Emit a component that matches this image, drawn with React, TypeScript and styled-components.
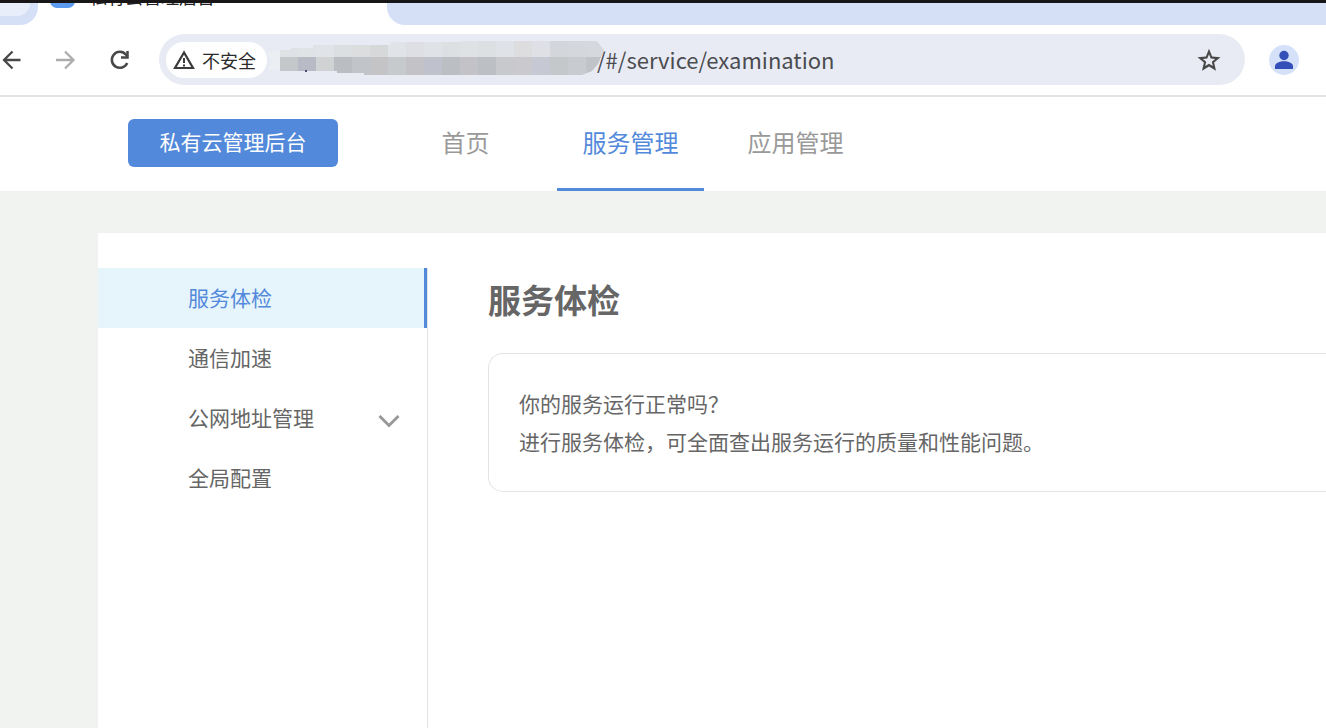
import React from "react";
import styled, { createGlobalStyle } from "styled-components";

const cjk = `"Noto Sans CJK SC", sans-serif`;

const GlobalStyle = createGlobalStyle`
  *, *::before, *::after { box-sizing: border-box; }
  body { margin: 0; background: #fff; font-family: ${cjk}; color: #666; }
  button, input { font: inherit; color: inherit; border: 0; background: none; padding: 0; margin: 0; }
  button { cursor: pointer; }
  a { color: inherit; text-decoration: none; }
  ul { list-style: none; margin: 0; padding: 0; }
`;

const Page = styled.div`
  display: flex;
  flex-direction: column;
  min-height: 100vh;
  border-top: 3px solid #181616;
  overflow: hidden;
`;

const TabStrip = styled.div`
  display: flex;
  height: 22px;
  overflow: hidden;
`;

const PreviousTabs = styled.div`
  flex: 0 0 38px;
  padding: 0 8px 9px 0;
  background: #d5e0f7;
  border-bottom-right-radius: 18px;
`;

const TabSearch = styled.button`
  display: block;
  width: 100%;
  height: 100%;
  background: #e8effb;
  border-bottom-right-radius: 14px;
`;

const ActiveTab = styled.div`
  flex: 0 0 349px;
  display: flex;
  align-items: flex-end;
  gap: 14px;
  height: 8px;
  padding: 0 0 3px 12px;
`;

const Favicon = styled.span`
  width: 25px;
  height: 24px;
  border-radius: 7px;
  background: #5b9bf0;
`;

const TabTitle = styled.span`
  color: #222;
  font-size: 18px;
  line-height: 24px;
`;

const InactiveTabs = styled.div`
  flex: 1;
  background: #d5e0f7;
  border-bottom-left-radius: 18px;
`;

const Toolbar = styled.div`
  display: flex;
  align-items: center;
  height: 72px;
  padding: 0 27px 1px 0;
  border-bottom: 2px solid #e3e3e3;
`;

const ToolButtons = styled.div`
  flex: 0 0 159px;
  display: flex;
  gap: 30px;
`;

const ToolButton = styled.button<{ $faded?: boolean }>`
  width: 24px;
  height: 24px;
  color: ${(p) => (p.$faded ? "#adadad" : "#484848")};
  svg { display: block; }
`;

const AddressBar = styled.div`
  flex: 1;
  min-width: 0;
  display: flex;
  align-items: center;
  height: 51px;
  padding: 0 24px 0 7px;
  border-radius: 26px;
  background: #e8ebf3;
`;

const SecurityChip = styled.button`
  flex: none;
  display: flex;
  align-items: center;
  gap: 7px;
  height: 36px;
  padding: 0 11px 0 7px;
  border-radius: 18px;
  background: #fff;
  color: #2b2b2b;
  font-size: 18px;
  line-height: 36px;
`;

const MaskedHost = styled.svg`
  flex: none;
  display: block;
  margin-right: -8px;
`;

const UrlInput = styled.input`
  position: relative;
  flex: 1;
  min-width: 0;
  height: 36px;
  padding-bottom: 2px;
  outline: none;
  color: #4b4b50;
  font-size: 22px;
`;

const StarButton = styled.button`
  flex: none;
  width: 24px;
  height: 24px;
  svg { display: block; }
`;

const Profile = styled.button`
  flex: none;
  width: 30px;
  height: 30px;
  margin-left: 24px;
  border-radius: 50%;
  background: #d5e1f8;
  svg { display: block; }
`;

const Header = styled.header`
  display: flex;
  align-items: flex-start;
  height: 94px;
  padding-left: 128px;
`;

const Brand = styled.a`
  width: 210px;
  height: 48px;
  margin-top: 22px;
  border-radius: 6px;
  background: #5389da;
  color: #fff;
  font-size: 21px;
  line-height: 44px;
  text-align: center;
`;

const TopNav = styled.nav`
  align-self: stretch;
  display: flex;
  gap: 18px;
  margin-left: 54px;
`;

const TopLink = styled.a<{ $active?: boolean }>`
  width: 147px;
  border-bottom: 3px solid ${(p) => (p.$active ? "#5389da" : "transparent")};
  color: ${(p) => (p.$active ? "#5389da" : "#999")};
  font-size: 24px;
  line-height: 90px;
  text-align: center;
`;

const Body = styled.div`
  flex: 1;
  display: flex;
  padding: 42px 0 0 98px;
  background: #f0f3f0;
`;

const Panel = styled.div`
  flex: 1;
  min-width: 0;
  display: flex;
  padding-top: 35px;
  background: #fff;
`;

const Sidebar = styled.nav`
  flex: 0 0 330px;
  border-right: 1px solid #e2e4e4;
`;

const SideLink = styled.a<{ $active?: boolean }>`
  display: flex;
  justify-content: space-between;
  height: 60px;
  padding: 0 24px 0 90px;
  border-right: 3px solid ${(p) => (p.$active ? "#5389da" : "transparent")};
  background: ${(p) => (p.$active ? "#e6f4fc" : "transparent")};
  color: ${(p) => (p.$active ? "#5389da" : "#666")};
  font-size: 21px;
  line-height: 58px;
  svg { margin-top: 26px; }
`;

const Content = styled.main`
  flex: 1;
  min-width: 0;
  padding: 7px 0 0 60px;
`;

const Title = styled.h1`
  margin: 0 0 30px;
  color: #666;
  font-size: 33px;
  font-weight: 700;
  line-height: 48px;
`;

const Card = styled.section`
  padding: 30px 0 31px 30px;
  border: 1px solid #e2e5e5;
  border-right: 0;
  border-radius: 15px 0 0 15px;
  font-size: 21px;
  line-height: 38px;
  p { margin: 0; }
`;

const hostTop = ["#dfe2e5", "#dfe3e5", "#e0e3e8", "#dcdfe2", "#dcdddf", "#d7d8da", "#e0e3e7", "#dddfe4", "#dfe2e6", "#dde0e3", "#dfe2e5", "#dce0e3", "#dfe2e7", "#dddde0", "#dfe0e5", "#d3d6da", "#d4d7db", "#d5d8dc"];
const hostBottom = ["#c5c8cb", "#b8bbc5", "#d1d2d3", "#babdc2", "#c1c4c8", "#c4c4c7", "#c7cacd", "#c3c2c6", "#bfc2cc", "#bbbec2", "#c3c3c7", "#bcbfc3", "#c7c9cc", "#cac9cd", "#c6c9d3", "#c5c8cb", "#c8cbcf", "#c0c3c8"];

function HostMosaic() {
  return (
    <MaskedHost width="338" height="40" viewBox="0 0 338 40" aria-hidden="true">
      <defs>
        <clipPath id="hostShape">
          <path d="M13 10H24V8H46V5H124V2H194V1H330L337 10L331 24L325 31L315 35H97V33H70V31H13Z" />
        </clipPath>
      </defs>
      <path d="M0 13L13 10V30H0L6 22Z" fill="#ebeff4" />
      <g clipPath="url(#hostShape)">
        {hostTop.map((fill, i) => (
          <rect key={i} x={13 + i * 18} y="0" width="18" height="17" fill={fill} />
        ))}
        {hostBottom.map((fill, i) => (
          <rect key={i} x={13 + i * 18} y="17" width="18" height="20" fill={fill} />
        ))}
      </g>
      <rect x="38" y="30" width="2" height="2" fill="#4b4b80" />
    </MaskedHost>
  );
}

const topLinks = ["首页", "服务管理", "应用管理"];
const sideLinks = [
  { label: "服务体检" },
  { label: "通信加速" },
  { label: "公网地址管理", expandable: true },
  { label: "全局配置" },
];

export default function App() {
  return (
    <>
      <GlobalStyle />
      <Page>
        <TabStrip>
          <PreviousTabs>
            <TabSearch aria-label="搜索标签页" />
          </PreviousTabs>
          <ActiveTab>
            <Favicon />
            <TabTitle>私有云管理后台</TabTitle>
          </ActiveTab>
          <InactiveTabs />
        </TabStrip>

        <Toolbar>
          <ToolButtons>
            <ToolButton aria-label="后退">
              <svg width="24" height="24" viewBox="0 0 24 24" fill="none" stroke="currentColor" strokeWidth="2.3">
                <path d="M20.5 12H4M12.5 3.500L4 12L12.500 20.500" />
              </svg>
            </ToolButton>
            <ToolButton aria-label="前进" $faded>
              <svg width="24" height="24" viewBox="0 0 24 24" fill="none" stroke="currentColor" strokeWidth="2.3">
                <path d="M2 12H19M11 3.500L19.500 12L11 20.500" />
              </svg>
            </ToolButton>
            <ToolButton aria-label="刷新">
              <svg width="24" height="24" viewBox="0 0 24 24" fill="none" stroke="currentColor" strokeWidth="2.5">
                <path d="M19.200 15A8 8 0 1 1 18 6.700L19.500 8.500" />
                <path d="M19.500 3V9.500H13" />
              </svg>
            </ToolButton>
          </ToolButtons>
          <AddressBar>
            <SecurityChip>
              <svg width="22" height="20" viewBox="0 0 22 20" fill="none" stroke="#3c3c3c" strokeWidth="2.200">
                <path d="M11 2.500L2 18H20Z" />
                <path d="M11 8V13M11 14.500V16.500" strokeWidth="2" />
              </svg>
              不安全
            </SecurityChip>
            <HostMosaic />
            <UrlInput aria-label="地址" defaultValue="/#/service/examination" />
            <StarButton aria-label="收藏">
              <svg width="24" height="24" viewBox="0 0 24 24" fill="#484848">
                <path d="M23.500 9.200L15.100 8.500L12 0.800L8.900 8.500L0.500 9.200L6.900 14.600L5 22.800L12 18.400L19 22.800L17.100 14.600ZM12 15.800L8.200 18L9.200 13.800L5.900 10.900L10.300 10.500L12 6.300L13.700 10.500L18.100 10.900L14.800 13.800L15.800 18Z" fillRule="evenodd" />
              </svg>
            </StarButton>
          </AddressBar>
          <Profile aria-label="个人资料">
            <svg width="30" height="30" viewBox="0 0 30 30" fill="#3350b8">
              <circle cx="15" cy="10.500" r="4.700" />
              <path d="M6 24V21C6 18 11 16.200 15 16.200S24 18 24 21V24Z" />
            </svg>
          </Profile>
        </Toolbar>

        <Header>
          <Brand href="#/">私有云管理后台</Brand>
          <TopNav aria-label="主导航">
            {topLinks.map((label) => (
              <TopLink key={label} href="#/service" $active={label === "服务管理"}>
                {label}
              </TopLink>
            ))}
          </TopNav>
        </Header>

        <Body>
          <Panel>
            <Sidebar aria-label="服务管理">
              <ul>
                {sideLinks.map(({ label, expandable }) => (
                  <li key={label}>
                    <SideLink href="#/service/examination" $active={label === "服务体检"}>
                      {label}
                      {expandable && (
                        <svg width="22" height="14" viewBox="0 0 22 14" fill="none" stroke="#999" strokeWidth="3">
                          <path d="M1.500 2L11 11.500L20.500 2" />
                        </svg>
                      )}
                    </SideLink>
                  </li>
                ))}
              </ul>
            </Sidebar>
            <Content>
              <Title>服务体检</Title>
              <Card>
                <p>你的服务运行正常吗？</p>
                <p>进行服务体检，可全面查出服务运行的质量和性能问题。</p>
              </Card>
            </Content>
          </Panel>
        </Body>
      </Page>
    </>
  );
}
